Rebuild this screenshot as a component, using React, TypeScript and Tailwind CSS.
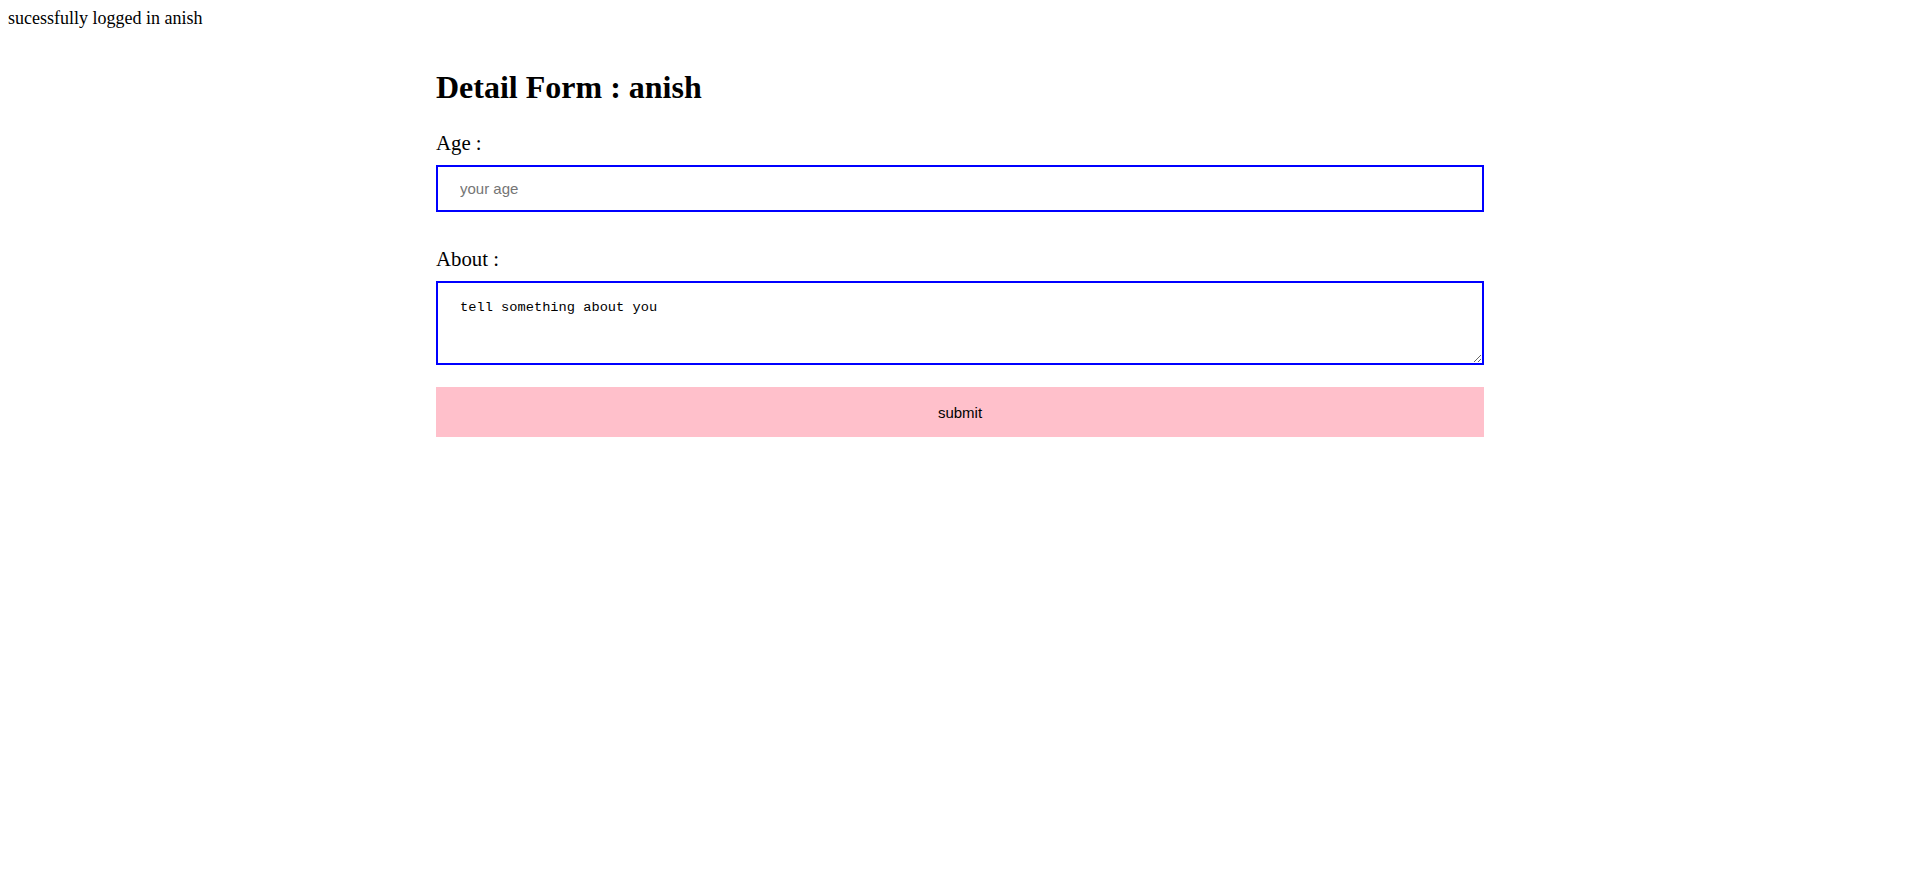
import { useState } from "react";

const App = () => {
  const [age, setAge] = useState("");
  const [about, setAbout] = useState("tell something about you");

  return (
    <div className="min-h-screen w-full bg-white p-2 text-black font-['Liberation_Serif',serif]">
      {/* Status line */}
      <p className="text-[18px] leading-[20.7px]">sucessfully logged in anish</p>

      {/* Detail form */}
      <form
        className="mx-auto mt-[40px] flex w-[1048px] flex-col"
        onSubmit={(e) => e.preventDefault()}
      >
        <h1 className="text-[32px] font-bold leading-[37px]">Detail Form : anish</h1>

        <label htmlFor="age" className="mt-[25px] block text-[20.8px] leading-[24px]">
          Age :
        </label>
        <input
          id="age"
          type="text"
          value={age}
          onChange={(e) => setAge(e.target.value)}
          placeholder="your age"
          className="mt-[10px] h-[47px] w-full border-2 border-[#0000ff] bg-white px-[22px] font-['Liberation_Sans',Arial,sans-serif] text-[15px] text-black outline-none placeholder:text-[#757575]"
        />

        <label htmlFor="about" className="mt-[35px] block text-[20.8px] leading-[24px]">
          About :
        </label>
        <textarea
          id="about"
          value={about}
          onChange={(e) => setAbout(e.target.value)}
          className="mt-[10px] h-[84px] w-full resize-y border-2 border-[#0000ff] bg-white px-[22px] pt-[16px] font-['Liberation_Mono',monospace] text-[13.7px] leading-[17px] text-black outline-none"
        />

        <button
          type="submit"
          className="mt-[22px] h-[50px] w-full bg-[#ffc0cb] pt-[4px] font-['Liberation_Sans',Arial,sans-serif] text-[15px] text-black"
        >
          submit
        </button>
      </form>
    </div>
  );
};

export default App;
